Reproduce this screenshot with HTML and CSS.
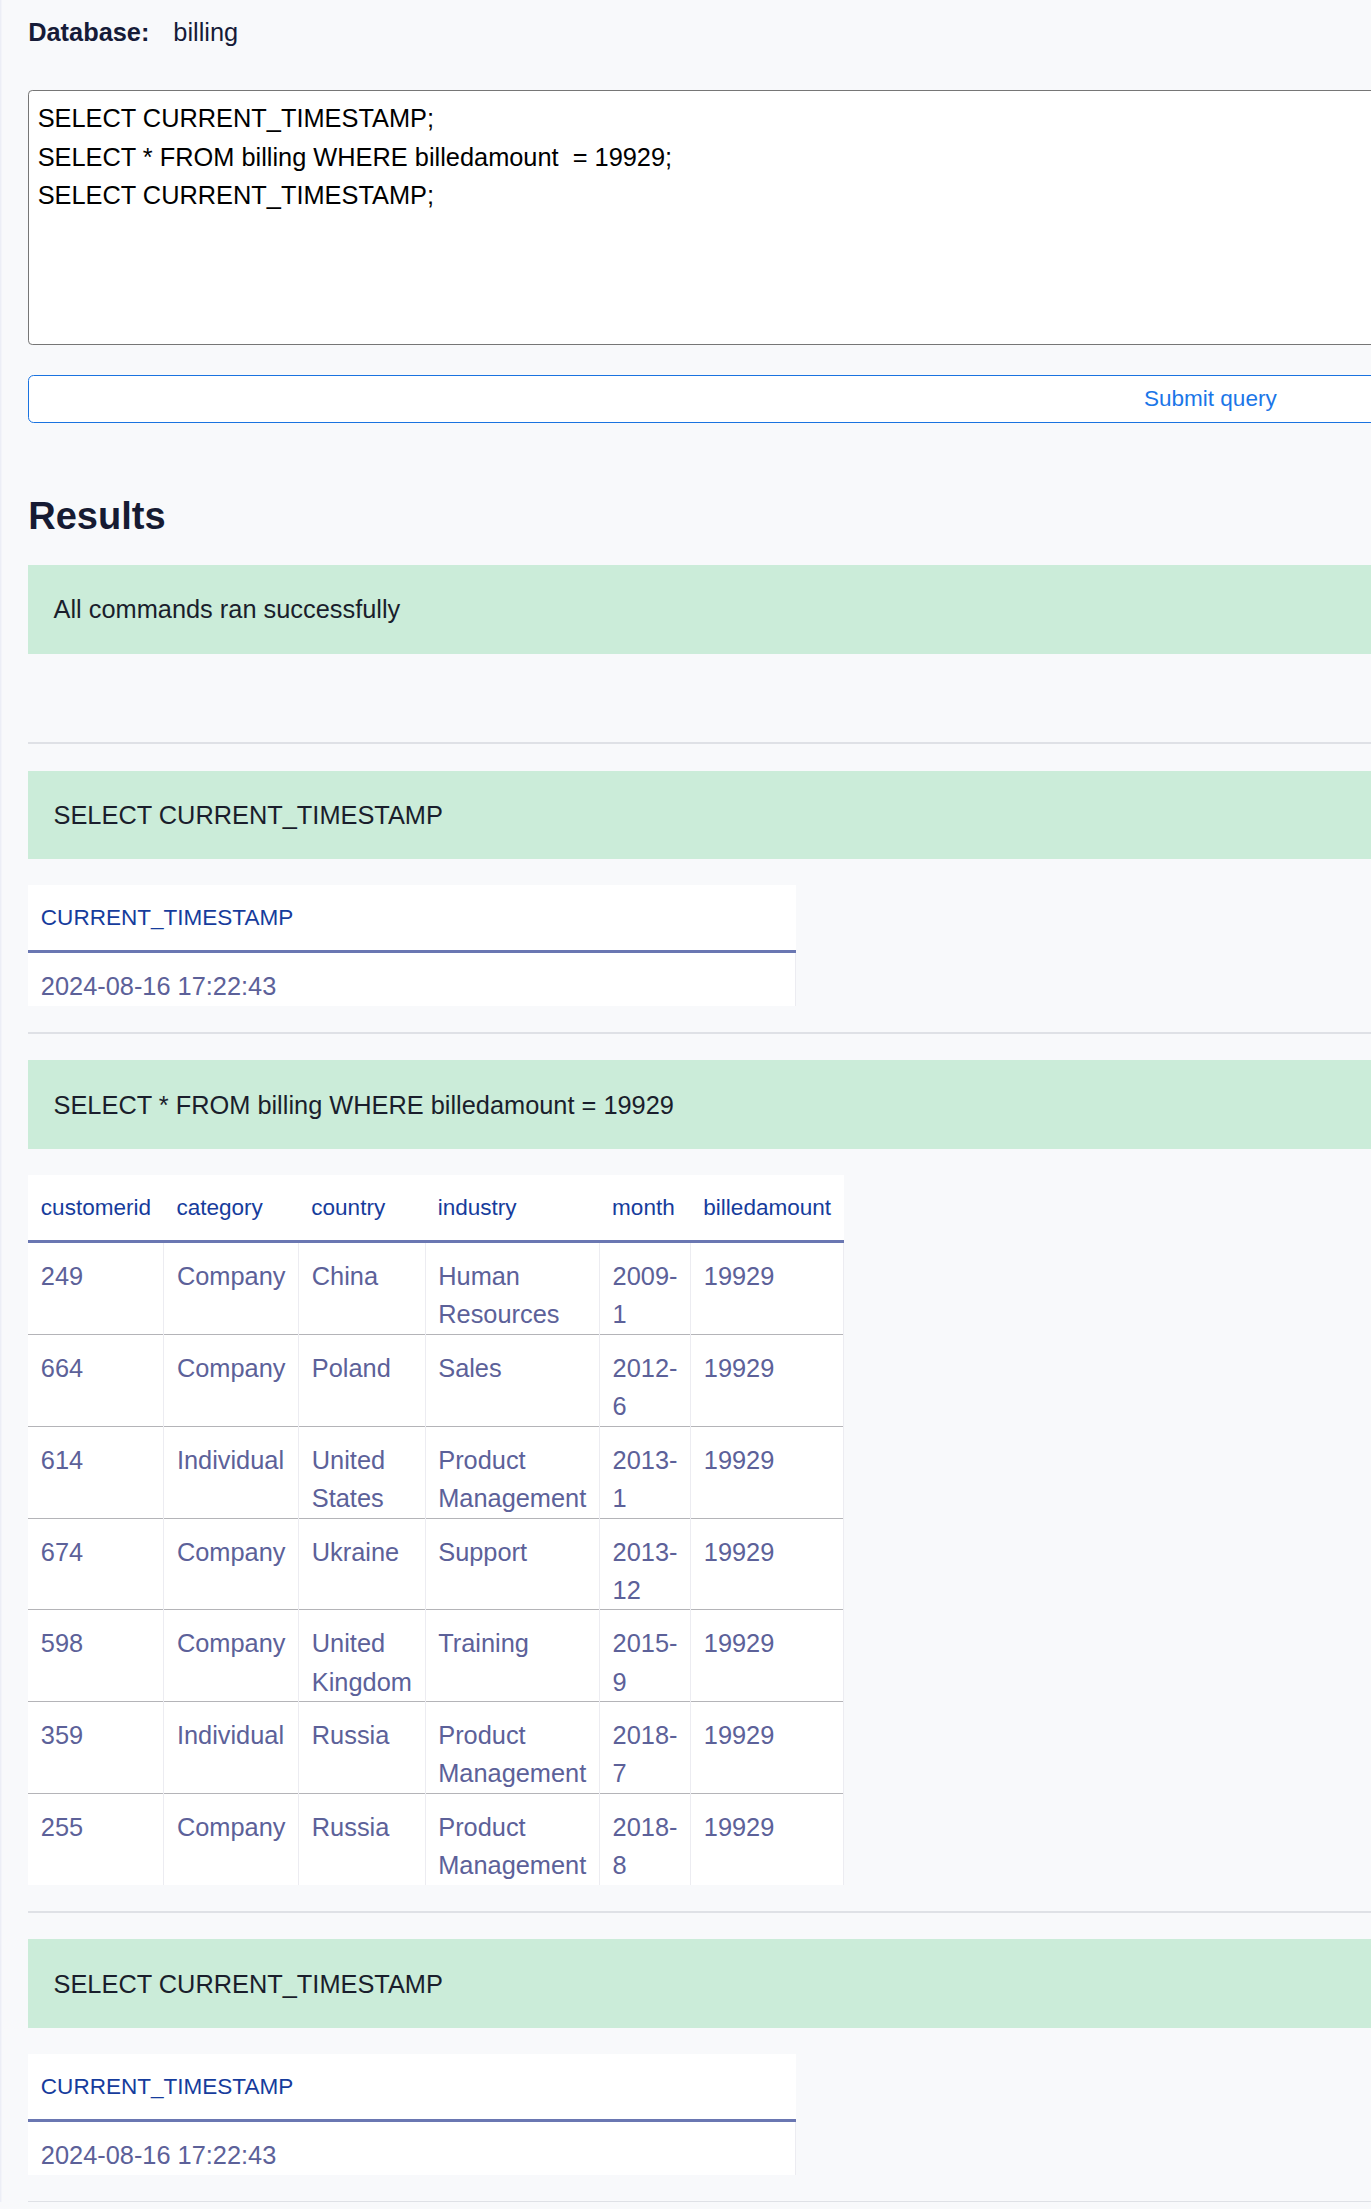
FILE: index.html
```html
<!DOCTYPE html>
<html lang="en">
<head>
<meta charset="utf-8">
<title>Query</title>
<link rel="stylesheet" href="styles.css">
</head>
<body>
<div class="page">
  <div class="db-line"><span class="db-label">Database:</span><span class="db-name">billing</span></div>
  <textarea class="query" spellcheck="false">SELECT CURRENT_TIMESTAMP;
SELECT * FROM billing WHERE billedamount  = 19929;
SELECT CURRENT_TIMESTAMP;</textarea>
  <button class="submit" type="button">Submit query</button>

  <h2 class="results-title">Results</h2>
  <div class="notice summary">All commands ran successfully</div>

  <section class="result">
    <hr class="rule">
    <div class="notice">SELECT CURRENT_TIMESTAMP</div>
    <div class="table-wrap">
      <table class="data">
        <thead><tr><th>CURRENT_TIMESTAMP</th></tr></thead>
        <tbody><tr><td>2024-08-16 17:22:43</td></tr></tbody>
      </table>
    </div>
  </section>

  <section class="result">
    <hr class="rule">
    <div class="notice">SELECT * FROM billing WHERE billedamount = 19929</div>
    <div class="table-wrap">
      <table class="data">
        <thead>
          <tr><th>customerid</th><th>category</th><th>country</th><th>industry</th><th>month</th><th>billedamount</th></tr>
        </thead>
        <tbody>
          <tr><td>249</td><td>Company</td><td>China</td><td>Human Resources</td><td>2009-<wbr>1</td><td>19929</td></tr>
          <tr><td>664</td><td>Company</td><td>Poland</td><td>Sales</td><td>2012-<wbr>6</td><td>19929</td></tr>
          <tr><td>614</td><td>Individual</td><td>United States</td><td>Product Management</td><td>2013-<wbr>1</td><td>19929</td></tr>
          <tr><td>674</td><td>Company</td><td>Ukraine</td><td>Support</td><td>2013-<wbr>12</td><td>19929</td></tr>
          <tr><td>598</td><td>Company</td><td>United Kingdom</td><td>Training</td><td>2015-<wbr>9</td><td>19929</td></tr>
          <tr><td>359</td><td>Individual</td><td>Russia</td><td>Product Management</td><td>2018-<wbr>7</td><td>19929</td></tr>
          <tr><td>255</td><td>Company</td><td>Russia</td><td>Product Management</td><td>2018-<wbr>8</td><td>19929</td></tr>
        </tbody>
      </table>
    </div>
  </section>

  <section class="result">
    <hr class="rule">
    <div class="notice">SELECT CURRENT_TIMESTAMP</div>
    <div class="table-wrap">
      <table class="data">
        <thead><tr><th>CURRENT_TIMESTAMP</th></tr></thead>
        <tbody><tr><td>2024-08-16 17:22:43</td></tr></tbody>
      </table>
    </div>
  </section>

  <hr class="rule">
</div>
</body>
</html>
```

FILE: styles.css
```css
* {
  box-sizing: border-box;
}

html {
  overflow: hidden;
  background: #f8f9fb;
}

body {
  margin: 0;
  zoom: 1.409;
  background: #f8f9fb;
  box-shadow: inset 1px 0 0 #eceef6;
  font-family: "Liberation Sans", Arial, Helvetica, sans-serif;
  font-size: 18px;
  line-height: 27px;
  color: #1b1f33;
}

.page {
  width: 1718px;
  padding: 9px 20px 0 20px;
}

.db-line {
  display: flex;
  gap: 17px;
  height: 27px;
  color: #161b38;
}

.db-label {
  font-weight: bold;
}

.query {
  display: block;
  width: 100%;
  height: 181px;
  margin: 28px 0 0 0;
  padding: 5.5px 6px;
  border: 1px solid #767676;
  border-radius: 3px;
  background: #ffffff;
  color: #000000;
  font-family: "Liberation Sans", Arial, Helvetica, sans-serif;
  font-size: 18px;
  line-height: 27.5px;
  resize: none;
  outline: none;
}

.submit {
  display: block;
  width: 100%;
  height: 34px;
  margin: 21px 0 0 0;
  padding: 0;
  border: 1px solid #1a73e0;
  border-radius: 4px;
  background: #ffffff;
  color: #1b76e8;
  font-family: "Liberation Sans", Arial, Helvetica, sans-serif;
  font-size: 16px;
  line-height: 24px;
}

.results-title {
  margin: 51px 0 18px 0;
  font-size: 27px;
  line-height: 32px;
  font-weight: bold;
  color: #161b33;
}

.notice {
  height: 63px;
  padding: 18px 18px;
  background: #cbecd9;
  color: #1a1e2c;
}

.summary {
  margin-bottom: 63px;
}

.rule {
  height: 1px;
  margin: 0;
  border: 0;
  background: #dfe1e6;
}

.result .notice {
  margin-top: 19px;
}

.table-wrap {
  width: 545px;
  margin: 18.5px 0 18.5px 0;
}

.data {
  width: 100%;
  border-collapse: collapse;
  background: #ffffff;
}

.data th {
  padding: 11px 9px 11px 9px;
  font-size: 16px;
  line-height: 24px;
  font-weight: normal;
  text-align: left;
  color: #163c9c;
  border-bottom: 2.5px solid #6a77b2;
  white-space: nowrap;
}

.data td {
  padding: 10px 9px 0.5px 9px;
  vertical-align: top;
  text-align: left;
  color: #5c6199;
  border-left: 1px solid #ececf1;
  border-right: 1px solid #ececf1;
}

.data td:first-child {
  border-left: 0;
}

.data tbody tr + tr td {
  border-top: 1px solid #b4b4b8;
}
```
